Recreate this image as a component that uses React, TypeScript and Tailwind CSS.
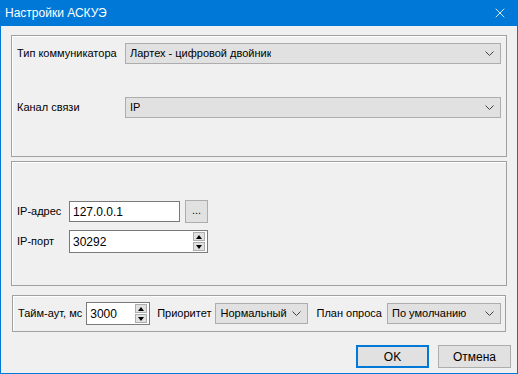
import { X } from "lucide-react";

const font = { fontFamily: '"Liberation Sans", Arial, sans-serif' };

function Chevron() {
	return (
		<svg width="9" height="5" viewBox="0 0 9 5" className="shrink-0">
			<polyline points="0.5,0.5 4.5,4.5 8.5,0.5" fill="none" stroke="#404040" strokeWidth="1" />
		</svg>
	);
}

function Combo({ value, className }: { value: string; className: string }) {
	return (
		<div className={`flex h-[21px] shrink-0 items-center justify-between border border-[#adadad] bg-[#e1e1e1] pl-[4px] pr-[6px] ${className}`}>
			<span className="truncate">{value}</span>
			<Chevron />
		</div>
	);
}

function Spin() {
	return (
		<div className="flex flex-col gap-px">
			{["up", "down"].map((dir) => (
				<div key={dir} className="flex h-[9px] w-[12px] items-center justify-center border border-[#adadad] bg-[#e1e1e1]">
					<svg width="6" height="4" viewBox="0 0 6 4">
						<polygon points={dir === "up" ? "0,4 6,4 3,0" : "0,0 6,0 3,4"} fill="#000" />
					</svg>
				</div>
			))}
		</div>
	);
}

function Group({ className, children }: { className: string; children: React.ReactNode }) {
	return <div className={`mx-[10px] border border-[#a0a0a0] shadow-[inset_1px_1px_0_#fff] ${className}`}>{children}</div>;
}

export default function App() {
	return (
		<div className="h-[374px] w-[518px] overflow-hidden bg-[#0078d7] text-[11px] text-black" style={font}>
			<div className="flex h-[26px] items-center justify-between pl-[5px] pr-[10px] text-[12px] text-white">
				<span>Настройки АСКУЭ</span>
				<X size={16} strokeWidth={1.25} />
			</div>
			<div className="mx-px flex h-[347px] flex-col bg-[#f0f0f0] pt-[9px] whitespace-nowrap">
				<Group className="flex h-[122px] flex-col gap-[33px] px-[5px] pt-[7px]">
					<div className="flex items-center">
						<span className="w-[108px]">Тип коммуникатора</span>
						<Combo value="Лартех - цифровой двойник" className="flex-1" />
					</div>
					<div className="flex items-center">
						<span className="w-[108px]">Канал связи</span>
						<Combo value="IP" className="flex-1" />
					</div>
				</Group>

				<Group className="mt-[4px] flex h-[125px] flex-col gap-[7px] px-[5px] pt-[38px]">
					<div className="flex items-center">
						<span className="w-[52px]">IP-адрес</span>
						<div className="flex h-[21px] w-[111px] items-center border border-[#7a7a7a] bg-white pl-[3px] text-[12px]">127.0.0.1</div>
						<div className="ml-[5px] flex h-[23px] w-[23px] items-center justify-center border border-[#adadad] bg-[#e1e1e1] pb-[3px]">...</div>
					</div>
					<div className="flex items-center">
						<span className="w-[52px]">IP-порт</span>
						<div className="flex h-[23px] w-[139px] items-center justify-between border border-[#7a7a7a] bg-white pl-[3px] pr-[2px] text-[12px]">
							<span className="self-start pt-[2px]">30292</span>
							<Spin />
						</div>
					</div>
				</Group>

				<Group className="mt-[9px] ml-[11px] mr-[11px] flex h-[37px] items-center px-[5px]">
					<span className="shrink-0">Тайм-аут, мс</span>
					<div className="ml-[4px] flex h-[23px] w-[64px] shrink-0 items-center justify-between border border-[#7a7a7a] bg-white pl-[3px] pr-[2px] text-[12px]">
						<span className="self-start pt-[2px]">3000</span>
						<Spin />
					</div>
					<span className="ml-[7px] shrink-0">Приоритет</span>
					<Combo value="Нормальный" className="ml-[4px] w-[93px]" />
					<span className="ml-[8px] shrink-0">План опроса</span>
					<Combo value="По умолчанию" className="ml-[5px] w-[114px]" />
				</Group>

				<div className="mt-[13px] flex justify-end gap-[9px] pr-[6px] text-[12px]">
					<div className="flex h-[23px] w-[73px] items-center justify-center border-2 border-[#0078d7] bg-[#e1e1e1]">OK</div>
					<div className="flex h-[23px] w-[73px] items-center justify-center border border-[#adadad] bg-[#e1e1e1]">Отмена</div>
				</div>
			</div>
		</div>
	);
}
